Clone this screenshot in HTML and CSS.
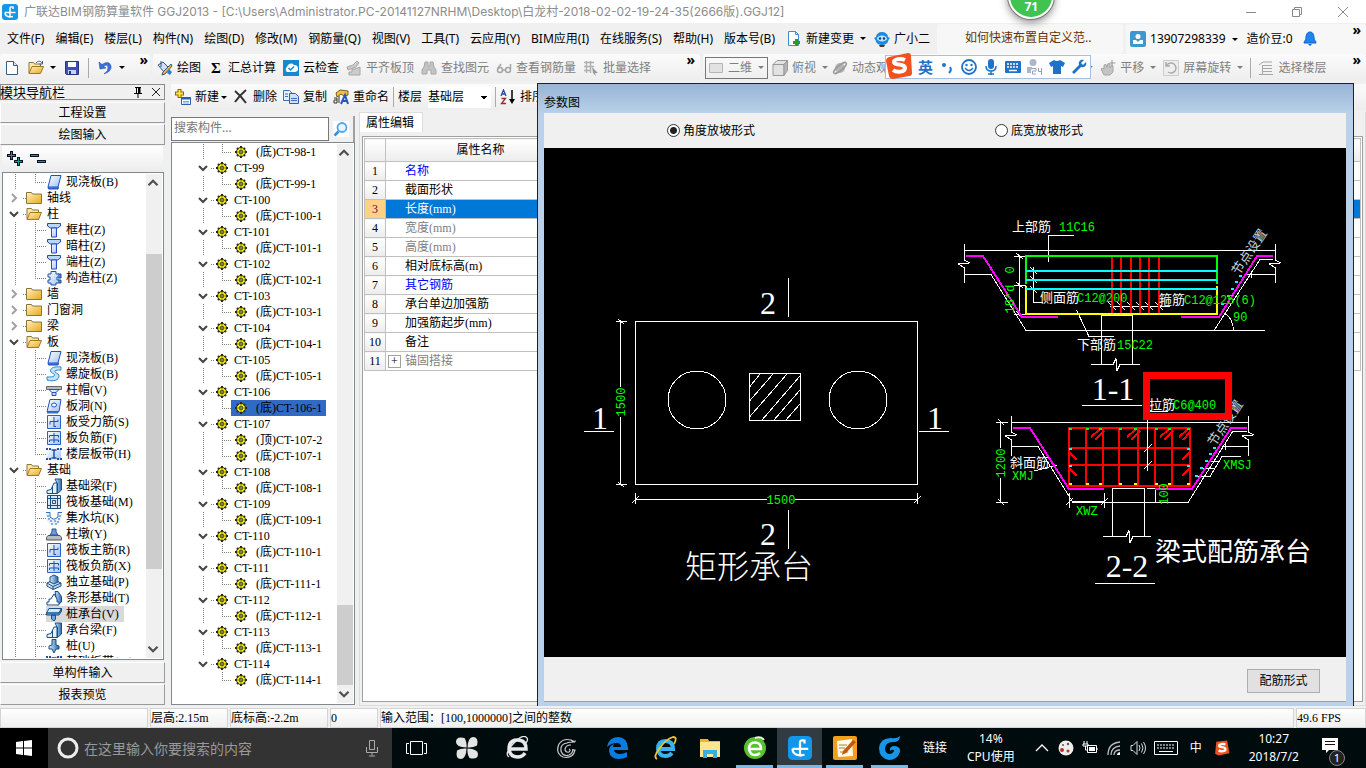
FILE: index.html
```html
<!DOCTYPE html>
<html lang="zh-CN">
<head>
  <meta charset="UTF-8" />
  <title>广联达BIM钢筋算量软件 GGJ2013</title>
  <meta name="viewport" content="width=device-width, initial-scale=1.0" />
  <link rel="stylesheet" href="styles.css">
</head>
<body>

  <!-- Icon sprite -->
  <svg class="sprite" aria-hidden="true">
    <defs>
      <linearGradient id="gold" x1="0" y1="0" x2="1" y2="1"><stop offset="0" stop-color="#fff3b8"/><stop offset="1" stop-color="#e9a820"/></linearGradient>
      <linearGradient id="ice" x1="0" y1="0" x2="1" y2="1"><stop offset="0" stop-color="#fff"/><stop offset="1" stop-color="#9fc3f5"/></linearGradient>
      <linearGradient id="steel" x1="0" y1="0" x2="1" y2="0"><stop offset="0" stop-color="#d8ecfb"/><stop offset="1" stop-color="#2467a8"/></linearGradient>
    </defs>
    <symbol id="logo" viewBox="0 0 16 16"><rect width="16" height="16" rx="3" fill="#1297ea"/><path d="M8 13V4q0-1.500 3-1v2M3 8.500h10.500M3 8.500q0 4 5 4.500l3-.5" fill="none" stroke="#fff" stroke-width="1.500"/></symbol>
    <symbol id="chev-open" viewBox="0 0 12 16"><path d="M2 6l4 4 4-4" fill="none" stroke="#444" stroke-width="2"/></symbol>
    <symbol id="chev-shut" viewBox="0 0 12 16"><path d="M4 4l4 4-4 4" fill="none" stroke="#a0a0a0" stroke-width="2"/></symbol>
    <symbol id="folder" viewBox="0 0 16 16"><path d="M.5 13.500v-11h5l1 1.500h9v9.500z" fill="url(#gold)" stroke="#8a7440"/></symbol>
    <symbol id="folder-open" viewBox="0 0 16 16"><path d="M1 13V2.500h4.500l1 1.500h6v2.500" fill="#ffe9a0" stroke="#8a7440"/><path d="M1 13.500l3-7h11.500l-3 7z" fill="url(#gold)" stroke="#a07820"/></symbol>
    <symbol id="gear" viewBox="0 0 12 12"><path d="M6 0v12M0 6h12M2 2l8 8M10 2l-8 8" stroke="#222" stroke-width="2"/><circle cx="6" cy="6" r="4.500" fill="#ff0" stroke="#222"/><path d="M6 2v8M2 6h8M3.500 3.500l5 5M8.500 3.500l-5 5" stroke="#5a5a00" stroke-width=".8"/><circle cx="6" cy="6" r="1.300" fill="#fff" stroke="#222"/></symbol>
    <symbol id="slab" viewBox="0 0 16 16"><path d="M5 1.500h10l-3 11.500H2z" fill="url(#ice)" stroke="#1f4fc0"/><path d="M2 13l.5 2H12l.5-2" fill="#3d6fd8" stroke="#1f4fc0"/></symbol>
    <symbol id="spiral" viewBox="0 0 16 16"><path d="M15 1C7 0 3 3 5 6c2 2 5 2 3 4-1 1-4 1-7 1v3c7 2 12 0 12-4 0-3-5-3-4-5 1-1 3-1 6-1z" fill="#bfe4fa" stroke="#2a86cc"/></symbol>
    <symbol id="column" viewBox="0 0 16 16"><path d="M1.500 1.500h13v2.500l-3 2h-7l-3-2z" fill="#bcd6fa" stroke="#1f4fa8"/><path d="M5.500 6h5v9h-5z" fill="url(#ice)" stroke="#1f4fc0"/></symbol>
    <symbol id="cross-col" viewBox="0 0 16 16"><path d="M5 1.500h5V4h3v3h-2v3h2v3h-3v2H5v-2H2v-3h2V7H2V4h3z" fill="url(#ice)" stroke="#1f4fa8"/><path d="M12 4h3v4h-3M12 10h3v3h-2" fill="#4f82c8" stroke="#1f4fa8"/></symbol>
    <symbol id="cap" viewBox="0 0 16 16"><path d="M.5 4.500h15v3H.5z" fill="#b8bcc0" stroke="#666"/><path d="M3 7.500h10l-3 3H6zM6 10.500h4v3H6z" fill="url(#ice)" stroke="#1f4fc0"/></symbol>
    <symbol id="hole" viewBox="0 0 16 16"><path d="M4 1.500h11l-2 12H1z" fill="url(#ice)" stroke="#1f4fc0"/><ellipse cx="8" cy="7" rx="2.500" ry="2" fill="#fff" stroke="#1f4fc0"/><path d="M1 13.500v2h11l1-2" fill="#3d6fd8"/></symbol>
    <symbol id="rebar-s" viewBox="0 0 16 16"><path d="M1.500 1.500h13v13h-13z" fill="url(#ice)" stroke="#2a5fd0"/><path d="M4 7.500h8M8 3v10M4 7.500v3M12 7.500v-2M8 12.500h2" fill="none" stroke="#1f4fa8"/></symbol>
    <symbol id="rebar-f" viewBox="0 0 16 16"><path d="M1.500 1.500h13v13h-13z" fill="url(#ice)" stroke="#2a5fd0"/><path d="M3.500 5.500h9v2M3.500 5.500v2M3.500 12v-2h9v2M8 3v10" fill="none" stroke="#1f4fa8"/></symbol>
    <symbol id="band" viewBox="0 0 16 16"><path d="M1 2.500h14v11H1z" fill="url(#ice)"/><path d="M0 3h5M11 3h5M0 13h5M11 13h5" stroke="#1f4fa8" stroke-dasharray="2 1" stroke-width="2"/><path d="M8 4v8M5.500 4h5M5.500 12h5" stroke="#1f4fa8" stroke-width="1.500"/></symbol>
    <symbol id="beam" viewBox="0 0 16 16"><path d="M9 1h6.500v11l-4 3.500V6z" fill="url(#steel)" stroke="#174f86"/><path d="M1 15.500v-3l4-1L8 5h3v10.500z" fill="#e4f1fb" stroke="#174f86"/><path d="M6.500 8v7" stroke="#174f86"/></symbol>
    <symbol id="raft" viewBox="0 0 16 16"><path d="M1.500 1.500h13v13h-13z" fill="#dcebfa" stroke="#174f86"/><path d="M4.500 1v14M11.500 1v14M1 4.500h14M1 11.500h14M6.500 6.500h3v3h-3z" fill="none" stroke="#174f86"/></symbol>
    <symbol id="pit" viewBox="0 0 16 16"><path d="M0 2.500h4V7l3 2h2l3-2V2.500h4v4L14 12l-4 3H5l-4-4z" fill="#e6f0fb"/><path d="M0 2.500h4V7l3 2h2l3-2V2.500h4" fill="none" stroke="#2a6fc0"/><path d="M1 6h2M13 6h2M2 9h2M12 9h2M4 11h2M8 11h2M11 12h2M5 14h2M9 14h2" stroke="#2a6fc0"/></symbol>
    <symbol id="pier" viewBox="0 0 16 16"><path d="M6 3h4v3l2 3H4l2-3z" fill="#6f9fd8" stroke="#1f4fa8"/><path d="M2 9.500h12l1.500 2v2.500H.5v-2.500z" fill="#b8bcc0" stroke="#555"/></symbol>
    <symbol id="footing" viewBox="0 0 16 16"><path d="M1 9l7-3 7 3v3l-8 3.500L1 12z" fill="url(#ice)" stroke="#174f86"/><path d="M4 3l4-2 4 2v5l-4 2-4-2z" fill="url(#steel)" stroke="#174f86"/><path d="M1 9l6 3.500 8-3.500M7 12.500v3" fill="none" stroke="#174f86"/></symbol>
    <symbol id="strip" viewBox="0 0 16 16"><path d="M9 1.500h3l3.500 5v5.500l-4 3z" fill="url(#steel)" stroke="#174f86"/><path d="M1 15v-3h2V9h2l3-5 3 5v3h2v3z" fill="#fff" stroke="#174f86"/></symbol>
    <symbol id="pilecap" viewBox="0 0 16 16"><path d="M3 2.500h12.500L13 7H.5z" fill="#d5e8fa" stroke="#174f86"/><path d="M.5 7H13l2.500-4.500V5L13 9H.5zM5.500 9h4v4L8 15l-2.500-2z" fill="#6fa4dc" stroke="#174f86"/></symbol>
    <symbol id="pile" viewBox="0 0 16 16"><path d="M6 1.500h4V7l3 1v3h-3l-2 4-2-4H3V8l3-1z" fill="url(#steel)" stroke="#174f86"/></symbol>
  </svg>

  <header class="titlebar">
    <svg class="ico"><use href="#logo"/></svg>
    <h1>广联达BIM钢筋算量软件 GGJ2013 - [C:\Users\Administrator.PC-20141127NRHM\Desktop\白龙村-2018-02-02-19-24-35(2666版).GGJ12]</h1>
    <div class="window-buttons">
      <button aria-label="最小化"><svg viewBox="0 0 12 12"><path d="M1 6.500h10"/></svg></button>
      <button aria-label="还原"><svg viewBox="0 0 12 12"><path d="M1.500 3.500h7v7h-7zM3.500 3V1.500h7v7H9"/></svg></button>
      <button aria-label="关闭"><svg viewBox="0 0 12 12"><path d="M1 1l10 10M11 1L1 11"/></svg></button>
    </div>
    <div class="speed-ball">71</div>
  </header>

  <nav class="menubar">
    <div class="menus">
      <button>文件(F)</button>
      <button>编辑(E)</button>
      <button>楼层(L)</button>
      <button>构件(N)</button>
      <button>绘图(D)</button>
      <button>修改(M)</button>
      <button>钢筋量(Q)</button>
      <button>视图(V)</button>
      <button>工具(T)</button>
      <button>云应用(Y)</button>
      <button>BIM应用(I)</button>
      <button>在线服务(S)</button>
      <button>帮助(H)</button>
      <button>版本号(B)</button>
      <button class="tool"><svg class="ico" viewBox="0 0 16 16"><path d="M2.500.5h7l3 3v11h-10z" fill="#fff" stroke="#3b8fd0"/><path d="M9.500.5v3h3" fill="none" stroke="#3b8fd0"/><path d="M10.500 8v7M7 11.500h7" stroke="#2a9a20" stroke-width="3"/></svg>新建变更<i class="caret"></i></button>
      <button class="tool helper"><svg class="ico" viewBox="0 0 16 16"><path d="M2 6a6 5 0 0 1 12 0l2 1-1.500 2c-.5 4-4 5-6.500 5s-6-1-6.500-5L0 7z" fill="#1c8ae0"/><ellipse cx="8" cy="7.500" rx="5" ry="3" fill="#bfe6ff"/><circle cx="6" cy="7.500" r="1.200" fill="#0d3a70"/><circle cx="10" cy="7.500" r="1.200" fill="#0d3a70"/><path d="M5 14l1 2h4l1-2z" fill="#5a3a1c"/></svg>广小二</button>
    </div>
    <a class="promo" href="#">如何快速布置自定义范..</a>
    <div class="account">
      <svg class="ico" viewBox="0 0 16 16"><rect width="16" height="16" rx="2" fill="#3f97cf"/><circle cx="8" cy="5.500" r="2.500" fill="#fff"/><path d="M3 13V9h3l2 2 2-2h3v4z" fill="#fff"/></svg>
      <button class="tool">13907298339<i class="caret"></i></button>
      <span>造价豆:0</span>
      <svg class="ico" viewBox="0 0 16 16"><path d="M8 1c3 0 4 3 4 6 0 2 2 3 2 5H2c0-2 2-3 2-5 0-3 1-6 4-6z" fill="#1c86f0" stroke="#0d5fc0"/><path d="M6 13h4l-2 2z" fill="#0d5fc0"/></svg>
      <button class="more">»</button>
    </div>
  </nav>

  <div class="toolbar">
    <div class="group file-group">
      <button class="tool" aria-label="新建"><svg class="ico" viewBox="0 0 16 16"><path d="M2.500 1.500h7l4 4v9h-11z" fill="#fff" stroke="#3a5a86"/><path d="M9.500 1.500v4h4" fill="#dfe8f5" stroke="#3a5a86"/></svg></button>
      <button class="tool" aria-label="打开"><svg class="ico" viewBox="0 0 16 16"><use href="#folder-open"/><path d="M8 3c2-2.500 5-2 6 0M14.500 1v3h-3" fill="none" stroke="#3a5a86"/></svg><i class="caret"></i></button>
      <button class="tool" aria-label="保存"><svg class="ico" viewBox="0 0 16 16"><path d="M1.500 1.500h13v13h-12l-1-1z" fill="#3c50b8" stroke="#26327c"/><path d="M4 2h8v5H4z" fill="#fff"/><path d="M4 10h8v4H4z" fill="#c9d2f0"/><path d="M5 11h2v3H5z" fill="#26327c"/></svg></button>
      <i class="sep"></i>
      <button class="tool" aria-label="撤销"><svg class="ico" viewBox="0 0 16 16"><path d="M2 2l1 7 6-1-2.500-1.500q3-3 4.500 0 1 4-4 7.500 8-3 7-8-2-6-9-1.500z" fill="#3a72d8" stroke="#2450a8" stroke-width=".6"/></svg><i class="caret"></i></button>
      <button class="more">»</button>
    </div>
    <div class="group edit-group">
      <button class="tool"><svg class="ico" viewBox="0 0 16 16"><path d="M1 5l5-3 6 6-5 4z" fill="#cfe0f5" stroke="#35557f"/><path d="M4 1v6" stroke="#35557f"/><path d="M14 4l1 2-7 8-3 1 1-3z" fill="#f0b840" stroke="#35557f"/><path d="M12 9l3 3-2 3-3-2z" fill="#2a7fd0"/></svg>绘图</button>
      <button class="tool"><b class="sigma">Σ</b>汇总计算</button>
      <button class="tool"><svg class="ico" viewBox="0 0 16 16"><rect width="16" height="16" fill="#1588cf"/><path d="M4 12a3 3 0 0 1 0-5 4 4 0 0 1 7-2 3.500 3.500 0 0 1 1 7z" fill="#fff"/><path d="M5.500 8l2 2 3.500-3.500" fill="none" stroke="#1588cf" stroke-width="1.500"/></svg>云检查</button>
      <button class="tool" disabled><svg class="ico" viewBox="0 0 16 16"><path d="M1 7l6-2 4-4 2 2-3 4-8 3zM3 12h3V9h3l5-2v8H3z" fill="#ccc" stroke="#a6a6a6"/></svg>平齐板顶</button>
      <button class="tool" disabled><svg class="ico" viewBox="0 0 16 16"><path d="M4 2h3v4h2V2h3l1 5 2 3v4h-5v-4H6v4H1v-4l2-3z" fill="#c4c4c4" stroke="#a6a6a6"/></svg>查找图元</button>
      <button class="tool" disabled><svg class="ico" viewBox="0 0 16 16"><g fill="none" stroke="#a6a6a6" stroke-width="1.500"><circle cx="4" cy="10" r="2.500"/><circle cx="12" cy="10" r="2.500"/><path d="M6.500 10h3M1.500 9L5 4M14.500 9V4"/></g></svg>查看钢筋量</button>
      <button class="tool" disabled><svg class="ico" viewBox="0 0 16 16"><path d="M1 2.500h10M1 6.500h10M1 10.500h7M3.500 1v12M7.500 1v12" fill="none" stroke="#b0b0b0" stroke-width="1.500"/><path d="M9 7l6 6h-3l1 3-3-3z" fill="#999"/></svg>批量选择</button>
      <button class="more">»</button>
    </div>
    <div class="group view-group">
      <button class="tool boxed" disabled><svg class="ico" viewBox="0 0 16 16"><path d="M1.500 3.500h13v9h-13z" fill="#e2e2e2" stroke="#b5b5b5"/></svg>二维<i class="caret"></i></button>
      <button class="tool" disabled><svg class="ico" viewBox="0 0 16 16"><path d="M1 4.500l4-4h10.500l-3.500 4zM1 4.500h11v11H1z" fill="#e2e2e2" stroke="#999"/><path d="M12 4.500l3.500-4v10l-3.500 5z" fill="#b5b5b5" stroke="#999"/></svg>俯视<i class="caret"></i></button>
      <button class="tool" disabled><svg class="ico" viewBox="0 0 16 16"><circle cx="8" cy="8" r="5" fill="#b5b5b5"/><ellipse cx="8" cy="8" rx="8" ry="2.500" transform="rotate(-40 8 8)" fill="none" stroke="#999" stroke-width="1.500"/></svg>动态观察</button>
      <div class="right-tools">
        <button class="tool" aria-label="动态观察选项" disabled><i class="caret"></i></button>
        <button class="tool" disabled><svg class="ico" viewBox="0 0 16 16"><path d="M4 15l-3-6 2-1 1 1V5l2-.5 1 3 1-4 2 .5v4l2-3 1 1v6l-3 3z" fill="#c4c4c4" stroke="#a6a6a6"/><path d="M12 0v6M9.500 3h6" stroke="#999"/></svg>平移<i class="caret"></i></button>
        <button class="tool" disabled><svg class="ico" viewBox="0 0 16 16"><path d="M.5.5h15v15H.5z" fill="#eee" stroke="#ccc"/><path d="M4 5a5 5 0 1 1 1 7M3 2v4h4" fill="none" stroke="#aaa" stroke-width="1.500"/></svg>屏幕旋转<i class="caret"></i></button>
        <i class="sep"></i>
        <button class="tool" disabled><svg class="ico" viewBox="0 0 16 16"><path d="M1 5l4-3h9M4 5.500h10M4 8.500h10M4 11.500h10M1 14.500h14M4.500 5v9" fill="none" stroke="#a6a6a6"/></svg>选择楼层</button>
      </div>
      <button class="more">»</button>
    </div>

    <!-- Floating input method bar -->
    <div class="ime">
      <svg class="ime-logo" viewBox="0 0 28 28"><path d="M4 5l19-4q3 0 3 3l1 17q0 3-3 3L8 27q-3 0-4-3L1 9q0-3 3-4z" fill="#f2501e"/><path d="M20 8c-4-2-11-1-11 2 0 4 11 1 11 6 0 4-8 5-12 2" fill="none" stroke="#fff" stroke-width="4"/></svg>
      <b>英</b>
      <svg class="ico" viewBox="0 0 16 16"><circle cx="5" cy="6" r="2" fill="#1e73c8"/><path d="M11 8q2 3-1 6" fill="none" stroke="#1e73c8" stroke-width="2"/></svg>
      <svg class="ico" viewBox="0 0 16 16"><circle cx="8" cy="8" r="7" fill="none" stroke="#1e73c8" stroke-width="1.800"/><circle cx="5.500" cy="6" r="1.200" fill="#1e73c8"/><circle cx="10.500" cy="6" r="1.200" fill="#1e73c8"/><path d="M4 9q4 5 8 0" fill="none" stroke="#1e73c8" stroke-width="1.500"/></svg>
      <svg class="ico" viewBox="0 0 16 16"><rect x="5" y="0" width="6" height="10" rx="3" fill="#1e73c8"/><path d="M3 7q0 5 5 5t5-5M8 12v4M5 15h6" fill="none" stroke="#1e73c8" stroke-width="1.500"/></svg>
      <svg class="ico" viewBox="0 0 16 16"><rect y="2" width="16" height="12" rx="1" fill="#1e73c8"/><path d="M2 5h12M2 8h12" stroke="#fff" stroke-width="1.500" stroke-dasharray="2 1"/><path d="M4 11.500h8" stroke="#fff" stroke-width="1.500"/></svg>
      <svg class="ico" viewBox="0 0 16 16"><circle cx="6" cy="3.500" r="3.500" fill="#a9b6cc"/><path d="M0 14V8h9v6z" fill="#a9b6cc"/><path d="M5 9.500h4v2.500H5.500v3H9M11.500 9v3.500h3M14.500 9v7" fill="none" stroke="#fff" stroke-width="3"/><path d="M5 9.500h4v2.500H5.500v3H9M11.500 9v3.500h3M14.500 9v7" fill="none" stroke="#8fa0bc" stroke-width="1"/></svg>
      <svg class="ico" viewBox="0 0 16 16"><path d="M5 1q3 2 6 0l5 3-2 4-2-1v8H4V7L2 8 0 4z" fill="#1e73c8"/></svg>
      <svg class="ico" viewBox="0 0 16 16"><path d="M15 3l-3 3-2-2 3-3c-3-1-6 1-5 5l-7 7 2 2 7-7c4 1 6-2 5-5z" fill="#1e73c8"/></svg>
    </div>
  </div>

  <main>
    <aside class="module-nav">
      <div class="dock-title">
        <h2>模块导航栏</h2>
        <svg class="ico" viewBox="0 0 16 16"><path d="M5 3.500h6M6.500 3v6M10 3v6M4 9.500h8M8 10v4" fill="none" stroke="#000"/><path d="M9 3v6" stroke="#000" stroke-width="2"/></svg>
        <svg class="ico" viewBox="0 0 16 16"><path d="M4 4l8 8M12 4l-8 8" stroke="#222"/></svg>
      </div>
      <button class="bar">工程设置</button>
      <button class="bar">绘图输入</button>
      <div class="expanders">
        <button aria-label="全部展开"><svg class="ico" viewBox="0 0 16 16"><path d="M4.500 0v9M0 4.500h9M11.500 6v9M7 10.500h9" stroke="#012" stroke-width="3"/><path d="M4.500 1v7M1 4.500h7M11.500 7v7M8 10.500h7" stroke="#1a9a8a" stroke-width="1"/></svg></button>
        <button aria-label="全部折叠"><svg class="ico" viewBox="0 0 16 16"><path d="M0 4.500h9M7 10.500h9" stroke="#012" stroke-width="3"/><path d="M1 4.500h7M8 10.500h7" stroke="#1a9a8a"/></svg></button>
      </div>
      <div class="tree-box nav-tree">
        <ul class="tree" id="module-tree"></ul>
        <div class="scroll"><svg viewBox="0 0 12 16"><path d="M2 10l4-4 4 4"/></svg><i class="thumb"></i><svg viewBox="0 0 12 16"><path d="M2 6l4 4 4-4"/></svg></div>
      </div>
      <button class="bar">单构件输入</button>
      <button class="bar">报表预览</button>
    </aside>

    <section class="workspace">
      <div class="component-bar">
        <button class="tool"><svg class="ico" viewBox="0 0 16 16"><path d="M4.500 0v9M0 4.500h9" stroke="#8a6a00" stroke-width="4"/><path d="M4.500 1v7M1 4.500h7" stroke="#ffe34a" stroke-width="2"/><path d="M6.500 8.500h9v7h-9z" fill="#fff" stroke="#2d5fb0"/><path d="M6 9.500h10" stroke="#2d5fb0" stroke-width="2"/><path d="M8 12.500h6M8 14h6" stroke="#7aa0dc"/></svg>新建<i class="caret near"></i></button>
        <button class="tool"><svg class="ico" viewBox="0 0 16 16"><path d="M2 2q6 5 11 12M13 1Q7 6 2 13" fill="none" stroke="#333" stroke-width="2"/></svg>删除</button>
        <button class="tool"><svg class="ico" viewBox="0 0 16 16"><path d="M.5 1.500h6l3 3v7h-9z" fill="#e4effc" stroke="#3d6fb8"/><path d="M6.500 4.500h6l3 3v7h-9z" fill="#cfe2fa" stroke="#2d5fb0"/><path d="M8 9.500h6M8 11.500h6M2 5h3M2 7.500h3" stroke="#3d6fb8"/></svg>复制</button>
        <button class="tool"><svg class="ico" viewBox="0 0 16 16"><path d="M3 4l4-3 8 1v4l-4 1-3-2-4 3z" fill="#f0c050" stroke="#7a5a10"/><path d="M8 15l4-9 3 9M9.500 12h5" fill="none" stroke="#2356c0" stroke-width="2"/><path d="M1 9h3v5H1v-3h3M6 7v7" fill="none" stroke="#333"/></svg>重命名</button>
        <i class="sep"></i>
        <label for="floor">楼层</label>
        <select id="floor"><option>基础层</option></select>
        <i class="sep"></i>
        <button class="tool sort"><svg class="ico" viewBox="0 0 16 16"><path d="M1 7l2.500-6L6 7M2 5h3" fill="none" stroke="#2348a8" stroke-width="1.300"/><path d="M1.500 9.500h4l-4 5h4.500" fill="none" stroke="#a02828" stroke-width="1.300"/><path d="M12 1v11" stroke="#000" stroke-width="1.500"/><path d="M9 10h6l-3 5z"/></svg>排序</button>
      </div>

      <div class="columns">
        <div class="components">
          <div class="search">
            <input type="text" aria-label="搜索构件" placeholder="搜索构件..." />
            <button aria-label="搜索"><svg viewBox="0 0 16 16"><path d="M1.500 14.500l4-4" stroke="#2f8fe0" stroke-width="2.500"/><circle cx="9" cy="6.500" r="4.500" fill="#eaf6ff" stroke="#4aa8ec" stroke-width="1.800"/></svg></button>
          </div>
          <div class="tree-box ct-tree">
            <ul class="tree" id="component-tree"></ul>
            <div class="scroll"><svg viewBox="0 0 12 16"><path d="M2 10l4-4 4 4"/></svg><i class="thumb"></i><svg viewBox="0 0 12 16"><path d="M2 6l4 4 4-4"/></svg></div>
          </div>
        </div>

        <div class="properties">
          <div class="tab">属性编辑</div>
          <div class="sheet">
            <table>
              <thead><tr><th class="num"></th><th>属性名称</th><th></th></tr></thead>
              <tbody>
                <tr><th class="num">1</th><td class="link">名称</td><td></td></tr>
                <tr><th class="num">2</th><td>截面形状</td><td></td></tr>
                <tr class="current"><th class="num">3</th><td>长度(mm)</td><td></td></tr>
                <tr><th class="num">4</th><td class="muted">宽度(mm)</td><td></td></tr>
                <tr><th class="num">5</th><td class="muted">高度(mm)</td><td></td></tr>
                <tr><th class="num">6</th><td>相对底标高(m)</td><td></td></tr>
                <tr><th class="num">7</th><td class="link">其它钢筋</td><td></td></tr>
                <tr><th class="num">8</th><td>承台单边加强筋</td><td></td></tr>
                <tr><th class="num">9</th><td>加强筋起步(mm)</td><td></td></tr>
                <tr><th class="num">10</th><td>备注</td><td></td></tr>
                <tr><th class="num">11</th><td class="muted group-cell"><button aria-label="展开">+</button>锚固搭接</td><td></td></tr>
              </tbody>
            </table>
          </div>
        </div>
      </div>
    </section>

    <!-- Parameter drawing dialog -->
    <div class="dialog" role="dialog" aria-label="参数图">
      <h2>参数图</h2>
      <div class="dialog-body">
        <div class="slope-options">
          <label><input type="radio" name="slope" checked />角度放坡形式</label>
          <label><input type="radio" name="slope" />底宽放坡形式</label>
        </div>
        <svg class="drawing" viewBox="544 148 802 509">
          <!-- Plan view -->
          <g class="w">
            <path d="M635.500 321.500h282v163h-282zM749.500 373.500h51v47h-51z"/>
            <path d="M760 374l-10.500 13M773 374l-23.500 27M787 374l-37.500 43M800 376l-38 44M800 390l-26 30M800 404l-14 16"/>
            <path d="M788.500 278v39M788.500 510v39M584 431.500h30M919 431.500h30"/>
            <path d="M620.500 321v66M620.500 417v68M616 321.500h11M616 484.500h11M618 319l6 5M618 482l6 5"/>
            <path d="M635 499.500h132M795 499.500h123M635.500 493v11M917.500 493v11M632 503l7-7M914 503l7-7"/>
          </g>
          <g class="w curve"><circle cx="697" cy="400" r="29"/><circle cx="858" cy="400" r="29"/></g>
          <g class="big">
            <text x="768" y="314">2</text><text x="768" y="545">2</text>
            <text x="600" y="429">1</text><text x="935" y="429">1</text>
            <text x="1113" y="400">1-1</text><text x="1127" y="577">2-2</text>
          </g>
          <text class="name" x="685" y="578">矩形承台</text>
          <text class="name scheme" x="1155" y="561">梁式配筋承台</text>
          <text class="g mid" x="781" y="504">1500</text>
          <text class="g mid" transform="translate(625 402) rotate(-90)">1500</text>

          <!-- Section 1-1 -->
          <g class="w">
            <path d="M965 250.500h311M964.500 244v16l5 3-11 1 6 4v15M1275.500 244v16l5 3-11 1 6 4v15"/>
            <path d="M965 274.500h26l35 56h239M1273 259.500h-13l-46 71M1275 274.500h-28M1251.500 271v7"/>
            <path d="M1048.500 262v-26.500h25M1019.500 255v61M1014 256.500h12M1014 285.500h12M1014 314.500h12M1016 253l7 6M1016 282l7 6M1016 311l7 6"/>
            <path d="M1033.500 267v35.500h9M1030 267l7 7M1030 276l7 7M1030 286l7 7"/>
            <path d="M1110 306.500h60M1108 302l8 8M1117 302l8 8M1127 302l8 8M1136 302l8 8M1145 302l8 8M1155 302l8 8"/>
            <path d="M1101.500 364v-48.500h31V364M1091 364.500h22l3-6 1 12 3-6h20M1076.500 310l12.500 26.500h25M1224 313q9 5 9.500 17"/>
            <path d="M1082 405.500h60M1095 583.500h60"/>
          </g>
          <g class="thick">
            <path class="magenta" d="M966 256h17l39 61h36M1273 256h-16l-38 61h-38"/>
            <path class="green" d="M1026 284v-28h191v28"/>
            <path class="yellow" d="M1026 286v28h191v-28"/>
            <path class="red" d="M1112 257v56M1121 257v56M1131 257v56M1140 257v56M1149 257v56M1159 257v56"/>
            <path class="cyan" d="M1026 271h191M1026 280h191M1026 289h191"/>
            <path class="cyan" d="M1239 276h3M1235 282h3M1231 289h3M1227 296h3M1221 304h3"/>
          </g>
          <g class="t">
            <text x="1012" y="231">上部筋</text><text x="1040" y="302">侧面筋</text><text x="1159" y="304">箍筋</text><text x="1077" y="349">下部筋</text>
            <text class="tilt" transform="translate(1234 273) rotate(-56)">节点设置</text>
          </g>
          <text class="g" x="1059" y="231">11C16</text>
          <text class="g" x="1077" y="302">C12@200</text>
          <text class="g" x="1184" y="304">C12@125(6)</text>
          <text class="g" x="1117" y="349">15C22</text>
          <text class="g" x="1233" y="321">90</text>
          <text class="g mid" transform="translate(1014 270) rotate(-90)">0</text>
          <text class="g mid" transform="translate(1014 299) rotate(-90)">18*d</text>

          <!-- Section 2-2 -->
          <g class="w">
            <path d="M1012 422.500h237M1011.500 416v16l5 3-11 1 6 4v16M1248.500 416v16l5 3-11 1 6 4v16"/>
            <path d="M1012 446.500h26l35 56h115l45-71.500h14M1249 446.500h-27M1225.500 443v7"/>
            <path d="M1241 456.500h-19l-12 20h-14M1220 461.500h-14M1214 468.500h-13"/>
            <path d="M1000.500 422v26M1000.500 478v25M996 422.500h12M996 502.500h12M998 419l6 6M998 499l6 6M1034 471l23-6"/>
            <path d="M1069.500 493v15M1104.500 493v15M1066 505l7-7M1101 505l7-7M1073 501.500h31M1155.500 489v14M1147 488.500h9"/>
            <path d="M1112.500 536v-47.500h32V536M1103 536.500h23l3-6 1 12 3-6h18"/>
          </g>
          <g class="thick">
            <path class="magenta" d="M1013 428h17l39 61h35M1247 428h-16l-39 61h-37"/>
            <path class="red" d="M1069 428h121v58h-121zM1086 428v58M1103 428v58M1119 428v58M1138 428v58M1155 428v58M1172 428v58M1069 448h121M1069 465h121"/>
            <path class="red" d="M1091 437l9-8M1095 440l9-9M1127 437l9-8M1131 440l9-9M1160 437l9-8M1164 440l9-9M1179 437l9-8M1183 440l7-8M1069 452l8 8M1069 468l8 8M1190 452l-8 8M1190 468l-8 8"/>
            <path class="green" d="M1069 429h3M1086 429h3M1099 429h3M1119 429h3M1134 429h3M1155 429h3M1168 429h3M1187 429h3"/>
            <path class="yellow" d="M1069 484h3M1086 484h3M1099 484h3M1119 484h3M1134 484h3M1155 484h3M1168 484h3M1187 484h3"/>
            <path class="cyan" d="M1069 449h3M1069 466h3M1187 449h3M1187 466h3M1213 448h3M1209 454h3M1205 461h3M1200 468h3M1195 476h3"/>
          </g>
          <path class="w" d="M1147.500 420v51M1144 452l8-8M1144 469l8-8M1149 411.500h19"/>
          <g class="t">
            <text x="1149" y="409">拉筋</text><text x="1010" y="467">斜面筋</text>
            <text class="tilt" transform="translate(1210 444) rotate(-56)">节点设置</text>
          </g>
          <text class="g" x="1173" y="409">C6@400</text>
          <text class="g" x="1012" y="480">XMJ</text>
          <text class="g" x="1223" y="469">XMSJ</text>
          <text class="g" x="1076" y="515">XWZ</text>
          <text class="g mid" transform="translate(1005 463) rotate(-90)">1200</text>
          <text class="g mid" transform="translate(1168 494) rotate(-90)">100</text>
          <path class="mark" d="M1146.500 375.500h82v41h-82z"/>
        </svg>
        <div class="dialog-foot"><button>配筋形式</button></div>
      </div>
    </div>
  </main>

  <footer class="statusbar">
    <span class="s-blank"></span>
    <span class="s-height">层高:2.15m</span>
    <span class="s-base">底标高:-2.2m</span>
    <span class="s-count">0</span>
    <span class="s-hint">输入范围：[100,1000000]之间的整数</span>
    <span class="s-fps">49.6 FPS</span>
  </footer>

  <div class="taskbar">
    <button class="start" aria-label="开始"><svg viewBox="0 0 16 16"><path d="M0 2l7-1v6.500H0zM8 1l8-1v7.500H8zM0 8.500h7V15l-7-1zM8 8.500h8V16l-8-1z" fill="#fff"/></svg></button>
    <div class="cortana">
      <svg viewBox="0 0 24 24"><circle cx="12" cy="12" r="9" fill="none" stroke="#eee" stroke-width="3"/></svg>
      <input type="text" aria-label="搜索" placeholder="在这里输入你要搜索的内容" />
      <svg class="mic" viewBox="0 0 14 18"><path d="M4.500 1.500h5v9h-5zM1.500 8v5.500h11V8M7 14v2.500M4 17h6" fill="none" stroke="#aaa"/></svg>
    </div>
    <div class="apps">
      <button aria-label="任务视图"><svg viewBox="0 0 24 24"><path d="M5.500 5.500h12v13h-12zM4 7.500H1.500v10H4M19 7.500h2.500v10H19" fill="none" stroke="#fff"/></svg></button>
      <button aria-label="风扇"><svg viewBox="0 0 24 24"><g fill="#e4e4e4"><path d="M11.500 11.500Q12 6 9.500 2 1 0 1 6q0 5 10.500 5.500z"/><path d="M12.500 11.500Q18 12 22 9.500q2-8.500-4-8.500-5 0-5.500 10.500z"/><path d="M12.500 12.500Q12 18 14.500 22q8.500 2 8.500-4 0-5-10.500-5.500z"/><path d="M11.500 12.500Q6 12 2 14.500 0 23 6 23q5 0 5.500-10.500z"/></g></svg></button>
      <button aria-label="浏览器"><svg viewBox="0 0 24 24"><path d="M5 13h16q0-9-8.500-9T4 13q1 8 8.500 8 5 0 7.500-4" fill="none" stroke="#e8e8e8" stroke-width="3.500"/><path d="M4 21Q-1 18 8 8t13-7q3 2 0 6" fill="none" stroke="#e8e8e8" stroke-width="1.300"/></svg></button>
      <button aria-label="漩涡"><svg viewBox="0 0 24 24"><path d="M21 5q-3 1-5-1Q8 2 4 8q-4 9 4 13 10 2 12-7h-3M20 6q-6 0-8 1-7 1-6 8 2 6 8 4 4-2 4-6M16 9q-6 0-6 5 1 3 4 2 2-2 0-3" fill="none" stroke="#ccc" stroke-width="1.200"/></svg></button>
      <button aria-label="Edge"><svg viewBox="0 0 24 24"><path d="M2 11Q4 1 13 1t10 11v2H9q1 4 6 4 4 0 7-2v5q-4 2-8 2-9 0-10-8 0-5 5-7-1 2-1 3h8q0-4-4-4-6 0-10 4z" fill="#0a7be0"/></svg></button>
      <button class="pinned" aria-label="Internet Explorer"><svg viewBox="0 0 24 24"><path d="M5 13h15q0-8-7.500-8T5 13q1 7 7.500 7 4 0 6.500-3" fill="none" stroke="#35b4f0" stroke-width="4"/><path d="M4 23q-4-2 2-10Q13 3 20 1q5 0 1 7" fill="none" stroke="#f4c430" stroke-width="1.800"/></svg></button>
      <button class="pinned" aria-label="文件资源管理器"><svg viewBox="0 0 24 24"><path d="M2 3h8l1 2h11v15H2z" fill="#f0b429"/><path d="M2 6h20v15H2z" fill="#ffe58f"/><path d="M5 22v-8h14v8h-4v-4H9v4z" fill="#35aee2"/></svg></button>
      <button class="open" aria-label="安全浏览器"><svg viewBox="0 0 24 24"><circle cx="12" cy="12" r="11" fill="#55c22e"/><path d="M6 13h12q0-6.500-6-6.500T6 13q1 6 6 6 3 0 5-2" fill="none" stroke="#fff" stroke-width="2.500"/><path d="M12 2q6-2 9 2" stroke="#e8f8d8" fill="none" stroke-width="2"/></svg></button>
      <button class="open active" aria-label="GGJ2013"><svg viewBox="0 0 16 16"><use href="#logo"/></svg></button>
      <button class="open" aria-label="记事本"><svg viewBox="0 0 24 24"><rect width="24" height="24" rx="2" fill="#f0a01c"/><path d="M4 5l15-2 1 17-15 1z" fill="#fffbe8"/><path d="M6 9h8M6 12h6M7 16h8" stroke="#b08030"/><path d="M20 4l3 2-10 11-4 2 1-4z" fill="#c05818"/></svg></button>
      <button class="open" aria-label="广联达"><svg viewBox="0 0 24 24"><path d="M22 0q0 5-5 6Q8 5 7 12q0 6 5 6 4-1 4-4-3-1-4 1-1-5 5-5 6 1 5 6-3 8-11 8Q1 22 1 12 2 2 13 2q6 1 9-2z" fill="#1596ea"/></svg></button>
    </div>
    <div class="tray">
      <span>链接</span>
      <div class="cpu">14%<br>CPU使用</div>
      <svg viewBox="0 0 16 16"><path d="M2 11l6-6 6 6" fill="none" stroke="#fff" stroke-width="1.300"/></svg>
      <svg viewBox="0 0 16 16"><circle cx="8" cy="8" r="7.500" fill="#eee"/><circle cx="4" cy="10" r="2" fill="#c03020"/><circle cx="10" cy="4" r="1.200" fill="#555"/><circle cx="5" cy="5" r="1" fill="#555"/><circle cx="10" cy="11" r="1.500" fill="#c03020"/></svg>
      <svg viewBox="0 0 16 16"><path d="M5.500 5.500h9v7h-9zM15 8v2M2 1v3M5 1v3M1 4h5v2H1zM3.500 6v4h2" fill="none" stroke="#fff"/><path d="M7 7h6v4H7z" fill="#fff"/></svg>
      <svg viewBox="0 0 16 16"><path d="M2 15Q2 3 14 2M5 15q0-8 9-9M8 15q0-5 6-5" fill="none" stroke="#bbb" stroke-width="1.300"/><path d="M11 15q0-2.500 3-3v3z" fill="#fff"/></svg>
      <svg viewBox="0 0 16 16"><path d="M1 5.500h2l4-4v13l-4-4H1zM9 5q2 3 0 6M11.500 3.500q3 4.500 0 9M13.500 2q4 6 0 12" fill="none" stroke="#ddd"/></svg>
      <svg class="wide" viewBox="0 0 24 16"><path d="M.5 1.500h23v13H.5z" fill="none" stroke="#fff"/><path d="M3 5h18M3 8h18" stroke="#fff" stroke-dasharray="2 1"/><path d="M5 11.500h14" stroke="#fff"/></svg>
      <span class="lang">中</span>
      <svg viewBox="0 0 28 28"><path d="M4 3l19-2 4 22-19 4-6-3z" fill="#f2501e"/><path d="M20 8c-4-2-11-1-11 2 0 4 11 1 11 6 0 4-8 5-12 2" fill="none" stroke="#fff" stroke-width="4"/></svg>
      <div class="clock">10:27<br>2018/7/2</div>
      <button class="notice" aria-label="通知"><svg viewBox="0 0 24 24"><path d="M1 2h16v12h-9l-3 3v-3H1z" fill="#fff"/><path d="M4 5.500h10M4 8.500h10" stroke="#111"/></svg><span>1</span></button>
    </div>
  </div>

  <script>
    // [icon, label, row classes]; folder and root icons start a branch
    const modules = [
      ['slab', '现浇板(B)', 'last'],
      ['folder', '轴线'],
      ['folder-open', '柱'],
      ['column', '框柱(Z)'], ['column', '暗柱(Z)'], ['column', '端柱(Z)'], ['cross-col', '构造柱(Z)', 'last'],
      ['folder', '墙'], ['folder', '门窗洞'], ['folder', '梁'],
      ['folder-open', '板'],
      ['slab', '现浇板(B)'], ['spiral', '螺旋板(B)'], ['cap', '柱帽(V)'], ['hole', '板洞(N)'],
      ['rebar-s', '板受力筋(S)'], ['rebar-f', '板负筋(F)'], ['band', '楼层板带(H)', 'last'],
      ['folder-open', '基础'],
      ['beam', '基础梁(F)'], ['raft', '筏板基础(M)'], ['pit', '集水坑(K)'], ['pier', '柱墩(Y)'],
      ['rebar-s', '筏板主筋(R)'], ['rebar-f', '筏板负筋(X)'], ['footing', '独立基础(P)'], ['strip', '条形基础(T)'],
      ['pilecap', '桩承台(V)', 'selected'], ['beam', '承台梁(F)'], ['pile', '桩(U)'], ['band', '基础板带(W)']
    ];

    const components = [['gear', '(底)CT-98-1', 'last']];
    for (let n = 99; n <= 114; n++) {
      components.push(['root', 'CT-' + n]);
      if (n === 107) components.push(['gear', '(顶)CT-107-2']);
      components.push(['gear', `(底)CT-${n}-1`, n === 106 ? 'last selected' : 'last']);
    }

    const use = (id, cls) => `<svg class="${cls}"><use href="#${id}"/></svg>`;

    function row([icon, label, cls = '']) {
      const isRoot = icon === 'root' || icon.startsWith('folder');
      if (isRoot) {
        const chev = icon === 'folder' ? 'chev-shut' : 'chev-open';
        return `<li class="root">${use(chev, 'chev')}<i class="dots"></i><span class="item">${use(icon === 'root' ? 'gear' : icon, 'pic')}<span>${label}</span></span></li>`;
      }
      return `<li class="child ${cls}"><i class="stem"></i><i class="elbow"></i><span class="item">${use(icon, 'pic')}<span>${label}</span></span></li>`;
    }

    document.getElementById('module-tree').innerHTML = modules.map(row).join('');
    document.getElementById('component-tree').innerHTML = components.map(row).join('');
  </script>

</body>
</html>
```
FILE: styles.css
```css
* {
  box-sizing: border-box;
}

body {
  margin: 0;
  height: 100vh;
  display: flex;
  flex-direction: column;
  overflow: hidden;
  background: #f0f0f0;
  color: #000;
  font: 12px/16px "Noto Sans", "Noto Sans CJK SC", sans-serif;
}

button {
  margin: 0;
  padding: 0;
  border: 0;
  background: none;
  color: inherit;
  font: inherit;
  white-space: nowrap;
}

h1, h2 {
  margin: 0;
  font: inherit;
}

svg {
  display: block;
  flex: none;
}

.sprite {
  position: absolute;
  width: 0;
  height: 0;
}

.ico {
  width: 16px;
  height: 16px;
}

/* title bar */
.titlebar {
  position: relative;
  display: flex;
  align-items: center;
  gap: 6px;
  flex: none;
  height: 23px;
  padding-left: 2px;
  background: #fff;
  color: #8c8c8c;
}

.titlebar h1 {
  flex: 1;
  font-family: Inter, "Noto Sans CJK SC", sans-serif;
  white-space: nowrap;
}

.window-buttons {
  display: flex;
}

.window-buttons button {
  width: 46px;
  display: flex;
  justify-content: center;
}

.window-buttons svg {
  width: 12px;
  height: 12px;
  fill: none;
  stroke: #888;
}

.speed-ball {
  position: absolute;
  left: 75.5%;
  transform: translateX(-50%);
  bottom: 4px;
  width: 46px;
  height: 46px;
  border: 2px solid #fff;
  border-radius: 50%;
  background: #40c351;
  box-shadow: 0 0 0 1px #777, 0 3px 8px rgba(0, 0, 0, 0.5);
  color: #fff;
  font-weight: bold;
  line-height: 14px;
  padding-top: 25px;
  text-align: center;
  z-index: 5;
}

/* menu bar */
.menubar {
  display: flex;
  flex: none;
  height: 31px;
  padding-top: 1px;
}

.menus {
  display: flex;
  align-items: center;
  gap: 11px;
  padding: 0 7px;
}

.menus button {
  padding-bottom: 1px;
}

.menus .helper {
  margin-left: -3px;
}

.tool {
  display: flex;
  align-items: center;
  gap: 4px;
}

.tool:disabled {
  color: #7f7f7f;
}

.caret {
  width: 6px;
  margin-left: 2px;
  border: 3px solid transparent;
  border-top-color: currentColor;
  border-bottom: 0;
}

.caret.near {
  margin-left: -2px;
}

.promo {
  width: 186px;
  padding: 6px 28px;
  background: #f7f7f7;
  border-radius: 3px;
  color: #663300;
  text-decoration: none;
  white-space: nowrap;
}

.account {
  flex: 1;
  display: flex;
  align-items: center;
  gap: 9px;
  margin-left: 3px;
  padding-left: 4px;
  border-radius: 3px;
  background: #f7f7f7;
}

.account .tool {
  margin-left: -5px;
}

.more {
  align-self: flex-start;
  margin-left: auto;
  padding-right: 5px;
  font-size: 14px;
  line-height: 12px;
  font-weight: bold;
}

/* toolbars */
.toolbar {
  position: relative;
  display: flex;
  gap: 3px;
  flex: none;
  height: 27px;
}

.group {
  display: flex;
  align-items: center;
  gap: 8px;
  border-radius: 3px;
  background: linear-gradient(#fbfbfb, #ededed);
}

.file-group {
  width: 150px;
  padding-left: 4px;
}

.file-group .more {
  padding-right: 2px;
}

.edit-group {
  width: 547px;
  padding-left: 4px;
  gap: 7px;
}

.sigma {
  width: 16px;
  font: bold 15px/16px "Liberation Serif", serif;
  text-align: center;
}

.view-group {
  flex: 1;
  padding-left: 2px;
  gap: 4px;
}

.boxed {
  height: 22px;
  padding: 0 3px 0 2px;
  border: 1px solid #777;
}

.right-tools {
  display: flex;
  align-items: center;
  gap: 7px;
  margin-left: auto;
}

.view-group .more {
  margin-left: 22px;
}

.sep {
  width: 1px;
  height: 20px;
  background: #aaa;
}

.ime {
  position: absolute;
  right: 275px;
  top: 1px;
  height: 24px;
  display: flex;
  align-items: center;
  gap: 6px;
  padding: 0 3px 0 32px;
  border: 1px solid #a9c0dc;
  background: #fff;
  color: #1e73c8;
}

.ime b {
  font-size: 15px;
}

.ime-logo {
  position: absolute;
  left: -1px;
  top: -4px;
  width: 28px;
  height: 28px;
}

/* main area */
main {
  position: relative;
  flex: 1;
  min-height: 0;
  display: flex;
  gap: 6px;
  padding-top: 3px;
}

.module-nav {
  width: 165px;
  display: flex;
  flex-direction: column;
  gap: 1px;
  padding-bottom: 1px;
  font-family: "Liberation Serif", "Noto Sans CJK SC", serif;
}

.dock-title {
  display: flex;
  align-items: center;
  height: 16px;
  margin-bottom: 1px;
  border: 1px solid #8c8c8c;
}

.dock-title h2 {
  flex: 1;
  margin-left: -1px;
  font-size: 13px;
  line-height: 13px;
}

.dock-title svg + svg {
  margin-left: 2px;
}

.bar {
  flex: none;
  height: 21px;
  border: 1px solid #fff;
  border-right-color: #9a9a9a;
  border-bottom-color: #9a9a9a;
  background: #f0f0f0;
}

.expanders {
  display: flex;
  align-items: center;
  gap: 7px;
  height: 26px;
  margin: 0 2px -1px;
  padding-left: 5px;
  background: linear-gradient(#fff, #ececec);
}

.tree-box {
  flex: 1;
  min-height: 0;
  display: flex;
  border: 1px solid #828790;
  background: #fff;
  font-family: "Liberation Serif", "Noto Sans CJK SC", serif;
}

.nav-tree {
  margin: 0 1px 1px 2px;
}

.tree {
  flex: 1;
  margin: 1px 0;
  padding: 0;
  list-style: none;
  overflow: hidden;
  white-space: nowrap;
}

.tree li {
  display: flex;
  height: 16px;
}

.chev {
  width: 12px;
  height: 16px;
}

.item {
  display: flex;
  align-items: center;
  height: 16px;
}

.nav-tree .pic {
  width: 16px;
  height: 16px;
  margin-right: 5px;
}

.nav-tree .root {
  padding-left: 5px;
}

.nav-tree .dots {
  width: 3px;
  margin-left: 3px;
}

.nav-tree .child {
  padding-left: 12px;
}

.nav-tree .child .pic {
  margin-right: 4px;
}

.nav-tree .selected .item {
  background: #d9d9d9;
  padding-right: 5px;
}

.dots {
  background: repeating-linear-gradient(90deg, #808080 0 1px, transparent 1px 2px) 0 8px / 100% 1px no-repeat;
}

.stem {
  width: 20px;
  background: repeating-linear-gradient(#808080 0 1px, transparent 1px 2px) 0 0 / 1px 100% no-repeat;
}

.elbow {
  width: 11px;
  background:
    repeating-linear-gradient(90deg, #808080 0 1px, transparent 1px 2px) 0 8px / 100% 1px no-repeat,
    repeating-linear-gradient(#808080 0 1px, transparent 1px 2px) 0 0 / 1px 100% no-repeat;
}

.last .elbow {
  background:
    repeating-linear-gradient(90deg, #808080 0 1px, transparent 1px 2px) 0 8px / 100% 1px no-repeat,
    repeating-linear-gradient(#808080 0 1px, transparent 1px 2px) 0 0 / 1px 8px no-repeat;
}

.ct-tree .pic {
  width: 12px;
  height: 12px;
  margin: 0 6px 0 0;
}

.ct-tree .root {
  padding-left: 25px;
}

.ct-tree .dots {
  width: 4px;
  margin: 0 1px 0 2px;
}

.ct-tree .child {
  padding-left: 31px;
}

.ct-tree .stem {
  width: 19px;
}

.ct-tree .elbow {
  width: 9px;
}

.ct-tree .child .item {
  padding: 0 4px;
}

.ct-tree .child .pic {
  margin-right: 9px;
}

.ct-tree li:last-child .stem {
  background: none;
}

.ct-tree .selected .item {
  background: #316ac5;
}

.scroll {
  display: flex;
  flex-direction: column;
  width: 16px;
  margin: 1px;
  background: #f0f0f0;
}

.scroll svg {
  width: 14px;
  height: 18px;
  fill: none;
  stroke: #505050;
  stroke-width: 2;
}

.thumb {
  background: #cdcdcd;
  margin-bottom: auto;
}

.nav-tree .thumb {
  height: 65%;
  margin-top: 62px;
}

.ct-tree .thumb {
  height: 80px;
  margin: auto 0 0;
}

/* workspace */
.workspace {
  flex: 1;
  min-width: 0;
  display: flex;
  flex-direction: column;
}

.component-bar {
  display: flex;
  align-items: center;
  gap: 6px;
  height: 26px;
  padding-left: 4px;
  background: linear-gradient(#fbfbfb, #ededed);
}

.component-bar .sep {
  margin: 0 -2px;
}

#floor {
  width: 63px;
  height: 22px;
  padding: 0;
  border: 0;
  appearance: none;
  background: linear-gradient(#000, #000) 53px 10px / 6px 1px no-repeat, linear-gradient(#000, #000) 54px 11px / 4px 1px no-repeat, linear-gradient(#000, #000) 55px 12px / 2px 1px no-repeat, #fff;
  font: inherit;
}

.columns {
  flex: 1;
  min-height: 0;
  display: flex;
  gap: 4px;
  padding-top: 2px;
}

.components {
  width: 184px;
  display: flex;
  flex-direction: column;
  margin-top: 4px;
  padding-bottom: 1px;
}

.search {
  display: flex;
  align-items: center;
  height: 26px;
  border-right: 2px solid #a0a0a0;
}

.search input {
  width: 158px;
  height: 24px;
  padding: 0 2px 4px;
  border: 1px solid #777;
  font: inherit;
}

.search input::placeholder {
  color: #777;
}

.search button {
  margin-left: 4px;
  background: #fff;
}

.search button svg {
  width: 16px;
  height: 16px;
}

.properties {
  flex: 1;
  display: flex;
  flex-direction: column;
  border: 1px solid #dcdcdc;
  border-top: 0;
}

.tab {
  width: 63px;
  height: 20px;
  padding-left: 6px;
  line-height: 19px;
  border: 1px solid #dcdcdc;
  border-width: 1px 1px 0 0;
  background: #fff;
}

.sheet {
  flex: 1;
  margin: 4px 2px 3px;
  padding: 1px;
  border: 1px solid #a0a0a0;
  background: #fff;
}

table {
  width: 100%;
  table-layout: fixed;
  border-collapse: collapse;
  font-family: "Liberation Serif", "Noto Sans CJK SC", serif;
}

th, td {
  height: 19px;
  padding: 0;
  border: 1px solid #c0c0c0;
  font-weight: normal;
  line-height: 16px;
  white-space: nowrap;
}

td:nth-child(2) {
  padding-left: 19px;
}

thead th {
  height: 23px;
  background: linear-gradient(#fff, #ececec);
}

thead th:nth-child(2) {
  width: 190px;
}

.num {
  width: 21px;
  background: linear-gradient(#fff, #ececec);
}

.link {
  color: #0000ff;
}

.muted {
  color: #808080;
}

.current td {
  background: #0078d7;
  color: #fff;
}

.current .num {
  background: #ffd184;
  color: #800040;
}

td.group-cell {
  padding-left: 2px;
}

.group-cell button {
  width: 13px;
  height: 13px;
  margin-right: 4px;
  border: 1px solid #a0a0a0;
  color: #000;
  line-height: 11px;
}

/* dialog */
.dialog {
  position: absolute;
  left: 537px;
  right: 12px;
  top: 2px;
  bottom: 0;
  display: flex;
  flex-direction: column;
  padding: 0 7px 4px 6px;
  border: 1px solid #222;
  border-bottom: 0;
  background: linear-gradient(#98b4d4, #b9d1ea 30px);
}

.dialog h2 {
  height: 29px;
  line-height: 37px;
}

.dialog-body {
  flex: 1;
  min-height: 0;
  display: flex;
  flex-direction: column;
  border-bottom: 1px solid #a0a0a0;
  background: #f0f0f0;
}

.slope-options {
  display: grid;
  grid-template-columns: 328px 1fr;
  align-items: center;
  flex: none;
  height: 35px;
  padding-left: 123px;
}

.slope-options label {
  display: flex;
  align-items: center;
  gap: 3px;
}

.slope-options input {
  width: 13px;
  height: 13px;
  margin: 0;
  appearance: none;
  border: 1px solid #333;
  border-radius: 50%;
  background: #fff;
}

.slope-options input:checked {
  background: radial-gradient(circle, #222 3px, #fff 4px);
}

.drawing {
  flex: 1;
  min-height: 0;
  width: 100%;
  background: #000;
}

.drawing path,
.drawing circle {
  fill: none;
  shape-rendering: crispEdges;
}

.w {
  stroke: #fff;
}

.thick {
  stroke-width: 2;
}

.magenta { stroke: #ff00ff; }
.green { stroke: #00ff00; }
.yellow { stroke: #ffff00; }
.red { stroke: #ff0000; }
.cyan { stroke: #00ffff; }

.mark {
  stroke: #ff0000;
  stroke-width: 7;
}

.drawing text {
  fill: #fff;
  font: 13px "Noto Sans CJK SC", sans-serif;
}

.drawing .big text {
  font: 32px "Liberation Serif", serif;
  text-anchor: middle;
}

.drawing .name {
  font-size: 32px;
  font-weight: 300;
}

.drawing .scheme {
  font-size: 26px;
  font-weight: 400;
}

.drawing .g {
  fill: #00ff00;
  font: 12px "Liberation Mono", monospace;
}

.drawing .mid {
  text-anchor: middle;
}

.drawing .tilt {
  fill: #c8d4dc;
  dominant-baseline: central;
}

.dialog-foot {
  display: flex;
  justify-content: flex-end;
  flex: none;
  height: 44px;
  padding: 12px 26px 0 0;
}

.dialog-foot button {
  width: 73px;
  height: 24px;
  border: 1px solid #adadad;
  background: #e1e1e1;
}

/* status bar */
.statusbar {
  display: flex;
  gap: 2px;
  flex: none;
  height: 22px;
  padding-top: 2px;
  font-family: "Liberation Serif", "Noto Sans CJK SC", serif;
}

.statusbar span {
  border: 1px solid #d4d4d4;
  background: linear-gradient(#fff, #f0f0f0);
  line-height: 18px;
  white-space: nowrap;
}

.s-blank { width: 148px; }
.s-height { width: 78px; }
.s-base { width: 98px; }
.s-count { width: 48px; }
.s-hint { flex: 1; }
.s-fps { width: 70px; }

/* taskbar */
.taskbar {
  display: flex;
  flex: none;
  height: 40px;
  background: #000b0e;
  color: #fff;
}

.start {
  width: 48px;
  background: #000;
}

.start svg {
  width: 16px;
  height: 16px;
  margin: auto;
}

.cortana {
  width: 344px;
  display: flex;
  align-items: center;
  padding: 0 13px 0 8px;
  background: #333;
}

.cortana svg {
  width: 24px;
  height: 24px;
}

.cortana input {
  flex: 1;
  min-width: 0;
  padding: 0 4px;
  border: 0;
  background: none;
  font: 14px "Noto Sans CJK SC", sans-serif;
}

.cortana input::placeholder {
  color: #999;
}

.cortana .mic {
  width: 14px;
  height: 18px;
}

.apps {
  display: flex;
}

.apps button {
  width: 50px;
  padding-top: 3px;
  border-bottom: 3px solid transparent;
}

.apps button svg {
  width: 24px;
  height: 24px;
  margin: auto;
}

.apps .pinned {
  width: 45px;
}

.apps .open {
  width: 37px;
  margin: 0 4px;
  border-bottom-color: #76b9ed;
}

.apps .active {
  width: 45px;
  margin: 0;
  background: #303c42;
}

.tray {
  flex: 1;
  display: flex;
  align-items: center;
  gap: 8px;
  padding-left: 11px;
}

.tray > svg {
  width: 16px;
  height: 16px;
}

.tray .wide {
  width: 24px;
}

.lang {
  margin: 0 4px;
}

.cpu,
.clock {
  line-height: 18px;
  text-align: center;
  white-space: nowrap;
}

.cpu {
  margin: 0 11px 0 12px;
}

.clock {
  margin: 0 14px 0 11px;
}

.notice {
  position: relative;
}

.notice svg {
  width: 24px;
  height: 24px;
}

.notice span {
  position: absolute;
  right: 0;
  bottom: -6px;
  width: 16px;
  height: 16px;
  border: 1px solid #888;
  border-radius: 50%;
  background: #222;
  font-size: 11px;
  line-height: 14px;
}
```
